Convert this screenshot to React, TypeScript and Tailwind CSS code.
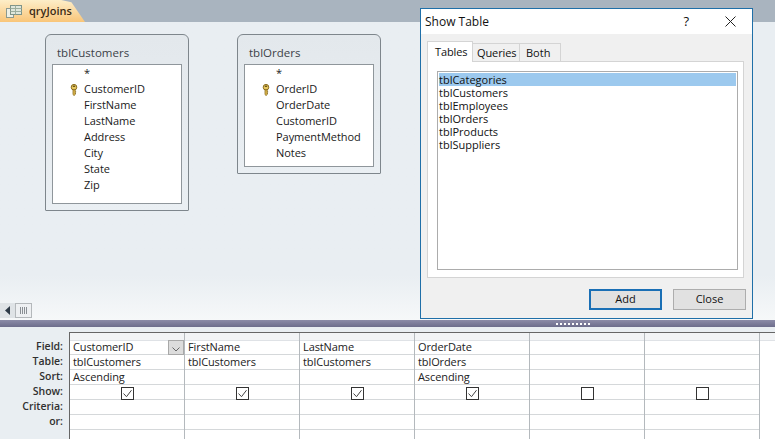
import React from "react";

const font = { fontFamily: '"Open Sans", "Noto Sans", sans-serif' };

function Key() {
  return (
    <svg width="8" height="12" viewBox="0 0 8 12" className="absolute left-[-14px] top-[3px]">
      <circle cx="4" cy="3.2" r="2.8" fill="#e8c860" stroke="#8a6d1f" strokeWidth="1" />
      <rect x="2.8" y="1.6" width="2.4" height="1.3" fill="#5f4a12" />
      <path d="M3 5.8h2.2v4.8l-1.1 1-1.1-1z" fill="#e3bd50" stroke="#8a6d1f" strokeWidth="0.8" />
      <path d="M5 7.8h1.2M5 9.4h1" stroke="#8a6d1f" strokeWidth="0.8" />
    </svg>
  );
}

function TableWindow({ title, fields, className, listH }: { title: string; fields: string[]; className: string; listH: string }) {
  return (
    <div className={`absolute flex flex-col rounded-t-[6px] rounded-b-[1px] border border-[#7e868c] bg-gradient-to-b from-[#e3e8ec] to-[#eaeff3] px-[6px] ${className}`}>
      <div className="h-[29px] pt-[10px] pl-[5px] text-[11.5px] leading-[16px] text-[#3c4248]">{title}</div>
      <div className={`border border-[#8f969b] bg-white pl-[31px] text-[11px] leading-[16px] tracking-[-0.05px] text-[#1a1a1a] ${listH}`}>
        {fields.map((f, i) => (
          <div key={f} className="relative h-[16px]">
            {i === 1 && <Key />}
            {f}
          </div>
        ))}
      </div>
    </div>
  );
}

function Check2({ checked }: { checked: boolean }) {
  return (
    <svg width="13" height="13" viewBox="0 0 13 13">
      <rect x="0.5" y="0.5" width="12" height="12" fill="#fff" stroke="#333" />
      {checked && <path d="M2.5 6.5l3 3.2 5-6.5" fill="none" stroke="#444" strokeWidth="1" />}
    </svg>
  );
}

const rows = [
  ["CustomerID", "tblCustomers", "Ascending", true],
  ["FirstName", "tblCustomers", "", true],
  ["LastName", "tblCustomers", "", true],
  ["OrderDate", "tblOrders", "Ascending", true],
  ["", "", "", false],
  ["", "", "", false],
] as const;

function Column({ c, first }: { c: (typeof rows)[number]; first: boolean }) {
  return (
    <div className="w-[115px] shrink-0 border-r border-[#b4b9bd]">
      <div className="h-[8px] border-b border-[#dfe2e6] bg-[#f2f4f6]" />
      <div className="relative h-[14px] border-b border-[#d5d8da] pl-[3px] leading-[11px] tracking-[-0.1px]">
        {c[0]}
        {first && (
          <div className="absolute right-[0px] top-[-1px] flex h-[15px] w-[16px] items-end justify-center border border-[#a8a8a8] bg-[#dcdcdc] pb-[2px]">
            <svg width="8" height="5" viewBox="0 0 8 5"><path d="M0.5 0.5L4 4l3.5-3.5" fill="none" stroke="#666" /></svg>
          </div>
        )}
      </div>
      <div className="h-[15px] border-b border-[#d5d8da] pl-[3px] leading-[13px] tracking-[-0.1px]">{c[1]}</div>
      <div className="h-[15px] border-b border-[#d5d8da] pl-[3px] leading-[13px] tracking-[-0.1px]">{c[2]}</div>
      <div className="flex h-[15px] items-center justify-center border-b border-[#d5d8da] pt-[2px]"><Check2 checked={c[3]} /></div>
      <div className="h-[15px] border-b border-[#d5d8da]" />
      <div className="h-[15px] border-b border-[#d5d8da]" />
      <div className="h-[10px]" />
    </div>
  );
}

export default function App() {
  return (
    <div className="relative flex h-[439px] w-[775px] flex-col overflow-hidden bg-[#e9eef2] text-[11px] text-[#222]" style={font}>
      <div className="flex h-[22px] shrink-0 items-end bg-[#a9b4bf]">
        <div className="flex h-[22px] w-[85px] items-center bg-gradient-to-b from-[#fdeec8] to-[#f9c578] pl-[6px] [clip-path:polygon(0_0,72%_0,84%_10%,100%_100%,0_100%)]">
          <svg width="16" height="13" viewBox="0 0 16 13">
            <rect x="0.5" y="3.5" width="7" height="9" fill="#eef0e6" stroke="#8c9a90" />
            <rect x="4.5" y="0.5" width="11" height="9" fill="#dfe7dc" stroke="#7f9488" />
            <path d="M4.5 3.5h11M4.5 6.5h11M9.5 0.5v9" stroke="#9cae9e" />
          </svg>
          <span className="ml-[7px] text-[11px] font-semibold text-[#3b2a14]">qryJoins</span>
        </div>
      </div>

      <div className="relative h-[298px] shrink-0 bg-gradient-to-b from-[#e9eef2] from-[85%] to-[#f6f8f9]">
        <TableWindow className="left-[45px] top-[12px] h-[177px] w-[144px]" listH="h-[140px]" title="tblCustomers" fields={["*", "CustomerID", "FirstName", "LastName", "Address", "City", "State", "Zip"]} />
        <TableWindow className="left-[237px] top-[12px] h-[140px] w-[144px]" listH="h-[103px]" title="tblOrders" fields={["*", "OrderID", "OrderDate", "CustomerID", "PaymentMethod", "Notes"]} />
        <div className="absolute bottom-[2px] left-0 flex h-[15px] items-center">
          <div className="flex h-[15px] w-[15px] items-center justify-center bg-[#dfe3e6]">
            <svg width="6" height="9" viewBox="0 0 6 9"><path d="M5 0v9L0 4.5z" fill="#2f3b48" /></svg>
          </div>
          <div className="flex h-[15px] w-[17px] items-center justify-center border border-[#b4b8bb] bg-[#eef0f2]">
            <svg width="7" height="7" viewBox="0 0 7 7"><path d="M0.5 0v7M2.5 0v7M4.5 0v7M6.5 0v7" stroke="#8a8f94" /></svg>
          </div>
        </div>
      </div>

      <div className="flex h-[7px] shrink-0 items-center justify-end bg-gradient-to-b from-[#8c8ca8] to-[#6d6d8c] pr-[184px]">
        <div className="h-[2px] w-[35px] bg-[repeating-linear-gradient(90deg,#fff_0_2px,transparent_2px_4px)]" />
      </div>

      <div className="flex flex-1 bg-[#e9eef2]">
        <div className="w-[69px] shrink-0 pt-[12px] pr-[6px] text-right text-[10.5px] font-semibold leading-[15px] text-[#303030]">
          <div>Field:</div>
          <div>Table:</div>
          <div>Sort:</div>
          <div>Show:</div>
          <div>Criteria:</div>
          <div>or:</div>
        </div>
        <div className="mt-[5px] flex flex-1 border-l border-t border-[#666] bg-white text-[11px] text-[#222]">
          {rows.map((c, i) => <Column key={i} c={c} first={i === 0} />)}
          <div className="flex-1"><div className="h-[8px] border-b border-[#dfe2e6] bg-[#f2f4f6]" /></div>
        </div>
      </div>

      <div className="absolute left-[420px] top-[8px] flex h-[311px] w-[333px] flex-col border border-[#1f6fa8] bg-[#f0f0f0] text-[11px] text-[#111]">
        <div className="flex h-[25px] shrink-0 items-center justify-between bg-white pl-[4px] text-[12px]">
          <span>Show Table</span>
          <div className="flex items-center">
            <span className="mr-[36px] text-[13px]">?</span>
            <svg className="mr-[16px]" width="11" height="11" viewBox="0 0 11 11"><path d="M0.5 0.5l10 10M10.5 0.5l-10 10" stroke="#222" /></svg>
          </div>
        </div>
        <div className="flex h-[27px] shrink-0 items-end pl-[6px]">
          <div className="z-10 mb-[-1px] h-[21px] w-[46px] border border-b-0 border-[#d4d4d4] bg-white pl-[7px] pt-[2px] tracking-[-0.1px]">Tables</div>
          <div className="h-[18px] w-[47px] border border-b-0 border-l-0 border-[#d4d4d4] bg-[#f0f0f0] pl-[4px] pt-[1px] tracking-[-0.1px]">Queries</div>
          <div className="h-[18px] w-[41px] border border-b-0 border-l-0 border-[#d4d4d4] bg-[#f0f0f0] pl-[6px] pt-[1px]">Both</div>
        </div>
        <div className="ml-[6px] mr-[8px] h-[217px] shrink-0 border border-[#d4d4d4] bg-white pl-[9px] pr-[5px] pt-[9px]">
          <div className="h-[199px] border border-[#acacac] bg-white p-[1px] leading-[13px]">
            {["tblCategories", "tblCustomers", "tblEmployees", "tblOrders", "tblProducts", "tblSuppliers"].map((t, i) => (
              <div key={t} className={`h-[13px] ${i === 0 ? "bg-[#9cc9ee]" : ""}`}>{t}</div>
            ))}
          </div>
        </div>
        <div className="flex justify-end gap-[11px] pr-[6px] pt-[11px]">
          <div className="flex h-[21px] w-[73px] items-center justify-center border-2 border-[#1a6fb5] bg-[#e1e1e1]">Add</div>
          <div className="flex h-[21px] w-[73px] items-center justify-center border border-[#adadad] bg-[#e1e1e1]">Close</div>
        </div>
      </div>
    </div>
  );
}
